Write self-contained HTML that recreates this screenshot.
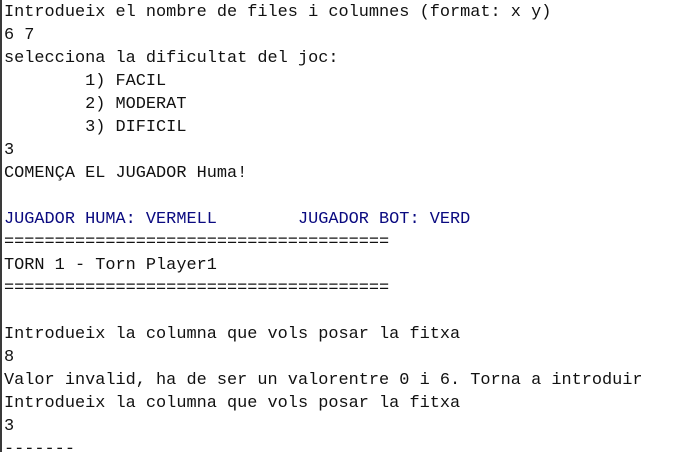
<!DOCTYPE html>
<html><head><meta charset="utf-8"><style>
html,body{margin:0;padding:0;background:#fff;}
body{width:680px;height:452px;overflow:hidden;position:relative;border-left:2px solid #3a3a3a;box-sizing:border-box;}
pre{margin:0;position:absolute;left:2px;top:1px;font-family:"Liberation Mono",monospace;font-size:16.9px;line-height:23px;color:#111;white-space:pre;tab-size:8;}
.b{color:#0a0a80;}
</style></head><body><pre>Introdueix el nombre de files i columnes (format: x y)
6 7
selecciona la dificultat del joc:
	1) FACIL
	2) MODERAT
	3) DIFICIL
3
COMENÇA EL JUGADOR Huma!

<span class="b">JUGADOR HUMA: VERMELL        JUGADOR BOT: VERD</span>
======================================
TORN 1 - Torn Player1
======================================

Introdueix la columna que vols posar la fitxa
8
Valor invalid, ha de ser un valorentre 0 i 6. Torna a introduir
Introdueix la columna que vols posar la fitxa
3
-------</pre></body></html>
